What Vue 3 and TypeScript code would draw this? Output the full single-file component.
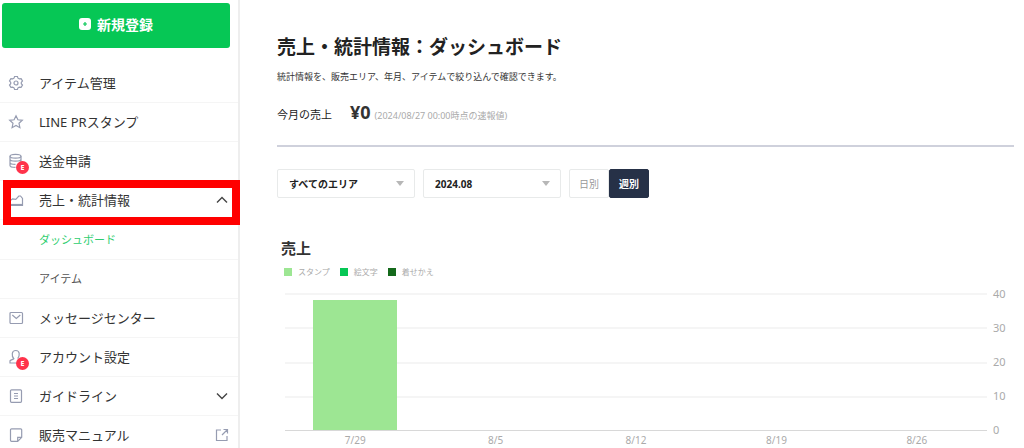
<script setup lang="ts">
import { ref } from 'vue'

type IconName = 'gear' | 'star' | 'coins' | 'chart' | 'mail' | 'user' | 'guide' | 'note'

interface MenuItem {
  label: string
  icon: IconName
  badge?: boolean
  trail?: 'up' | 'down' | 'external'
  highlighted?: boolean
  children?: { label: string; active: boolean }[]
}

const menu: MenuItem[] = [
  { label: 'アイテム管理', icon: 'gear' },
  { label: 'LINE PRスタンプ', icon: 'star' },
  { label: '送金申請', icon: 'coins', badge: true },
  {
    label: '売上・統計情報',
    icon: 'chart',
    trail: 'up',
    highlighted: true,
    children: [
      { label: 'ダッシュボード', active: true },
      { label: 'アイテム', active: false },
    ],
  },
  { label: 'メッセージセンター', icon: 'mail' },
  { label: 'アカウント設定', icon: 'user', badge: true },
  { label: 'ガイドライン', icon: 'guide', trail: 'down' },
  { label: '販売マニュアル', icon: 'note', trail: 'external' },
]

const area = ref('すべてのエリア')
const month = ref('2024.08')
const unit = ref<'day' | 'week'>('week')

const legend = [
  { label: 'スタンプ', kind: 'sticker' },
  { label: '絵文字', kind: 'emoji' },
  { label: '着せかえ', kind: 'theme' },
]

const maxValue = 40
const ticks = [40, 30, 20, 10, 0]
const weeks = [
  { label: '7/29', value: 38 },
  { label: '8/5', value: 0 },
  { label: '8/12', value: 0 },
  { label: '8/19', value: 0 },
  { label: '8/26', value: 0 },
]
</script>

<template>
  <div class="shell">
    <aside class="sidebar">
      <button class="create" type="button">
        <svg width="12" height="12" viewBox="0 0 12 12" aria-hidden="true">
          <rect width="12" height="12" rx="3" fill="#fff" />
          <path d="M6 4v4M4 6h4" stroke="#06c755" stroke-width="1.2" />
        </svg>
        新規登録
      </button>
      <nav>
        <ul class="menu">
          <li v-for="item in menu" :key="item.label">
            <a href="#" class="row" :class="{ highlighted: item.highlighted }">
              <span class="icon">
                <svg width="16" height="16" viewBox="0 0 16 16" aria-hidden="true">
                  <template v-if="item.icon === 'gear'">
                    <path d="M6.600 1.500h2.800l.6 1.700 1.300.7 1.800-.3 1.400 2.400-1.200 1.400v1.300l1.200 1.300-1.400 2.400-1.800-.3-1.300.7-.6 1.700H6.600L6 12.800l-1.300-.7-1.800.3L1.500 10l1.200-1.300V7.400L1.500 6l1.400-2.400 1.800.3L6 3.200z" />
                    <circle cx="8" cy="8" r="2" />
                  </template>
                  <path v-else-if="item.icon === 'star'" d="M8 1.800l1.900 4 4.400.5-3.300 3 .9 4.400L8 11.500l-3.900 2.200.9-4.400-3.300-3 4.400-.5z" />
                  <template v-else-if="item.icon === 'coins'">
                    <ellipse cx="7.500" cy="3.200" rx="5.500" ry="1.900" />
                    <path d="M2 3.200v9.300c0 1.100 2.400 1.900 5.500 1.900M13 3.200V9M2 6.300c0 1.100 2.400 1.900 5.500 1.900S13 7.400 13 6.300M2 9.400c0 1.100 2.400 1.900 5.500 1.900" />
                  </template>
                  <template v-else-if="item.icon === 'chart'">
                    <path d="M1.500 13.500V9.300l3-2.500 3.300.6 3-3.400h1.700l2 2.500v7z" />
                    <path d="M1.500 12.500h13" />
                  </template>
                  <template v-else-if="item.icon === 'mail'">
                    <rect x="2" y="2.500" width="12.500" height="11" rx="1" />
                    <path d="M4.300 5l4 3.400 4-3.400" />
                  </template>
                  <path v-else-if="item.icon === 'user'" d="M9 14H2v-2.300c1.500-1 3-1.300 3.800-2C4.300 8 4.100 6 4.300 4.500 4.500 2.700 6 1.500 7.800 1.500s3.200 1.200 3.400 3c.2 1.500-.2 3.500-1.500 5.200" />
                  <template v-else-if="item.icon === 'guide'">
                    <rect x="2.500" y="1.800" width="11" height="12.500" rx="1" />
                    <path d="M6 5.500h4M6 8h4M6 10.500h4" />
                  </template>
                  <path v-else d="M3.500 1.800h9.200a1 1 0 0 1 1 1v7.500l-4 4H3.500a1 1 0 0 1-1-1V2.800a1 1 0 0 1 1-1zM13.700 10.300h-4v4" />
                </svg>
                <span v-if="item.badge" class="badge">E</span>
              </span>
              <span class="label">{{ item.label }}</span>
              <svg v-if="item.trail" class="trail" width="14" height="14" viewBox="0 0 14 14" aria-hidden="true">
                <path v-if="item.trail === 'up'" class="arrow" d="M2 9.500l5-5 5 5" />
                <path v-else-if="item.trail === 'down'" class="arrow" d="M2 4.500l5 5 5-5" />
                <path v-else d="M6 2H1.500v10.500H12V8M8.500 1.500h4v4M12.500 1.500L7 7" />
              </svg>
            </a>
            <ul v-if="item.children" class="submenu">
              <li v-for="child in item.children" :key="child.label">
                <a href="#" class="row child" :class="{ active: child.active }">{{ child.label }}</a>
              </li>
            </ul>
          </li>
        </ul>
      </nav>
    </aside>

    <main class="content">
      <header class="head">
        <h1>売上・統計情報：ダッシュボード</h1>
        <p class="lead">統計情報を、販売エリア、年月、アイテムで絞り込んで確認できます。</p>
        <p class="sales">
          <span class="sales-name">今月の売上</span>
          <strong>¥0</strong>
          <small>(2024/08/27 00:00時点の速報値)</small>
        </p>
      </header>

      <div class="filters">
        <div class="picker">
          <select v-model="area" aria-label="エリア">
            <option>すべてのエリア</option>
          </select>
          <svg width="8" height="5" viewBox="0 0 8 5" aria-hidden="true"><path d="M0 0h8L4 5z" /></svg>
        </div>
        <div class="picker">
          <select v-model="month" aria-label="年月">
            <option>2024.08</option>
          </select>
          <svg width="8" height="5" viewBox="0 0 8 5" aria-hidden="true"><path d="M0 0h8L4 5z" /></svg>
        </div>
        <div class="units">
          <button type="button" :class="{ on: unit === 'day' }" :aria-pressed="unit === 'day'" @click="unit = 'day'">日別</button>
          <button type="button" :class="{ on: unit === 'week' }" :aria-pressed="unit === 'week'" @click="unit = 'week'">週別</button>
        </div>
      </div>

      <section class="report">
        <h2>売上</h2>
        <ul class="legend">
          <li v-for="entry in legend" :key="entry.kind">
            <i :class="entry.kind"></i>{{ entry.label }}
          </li>
        </ul>
        <div class="chart">
          <div class="plot-column">
            <div class="plot">
              <div class="lines"><span v-for="tick in ticks.slice(1)" :key="tick"></span></div>
              <div class="bars">
                <div v-for="week in weeks" :key="week.label" class="slot">
                  <div class="bar" :style="{ height: (week.value / maxValue) * 100 + '%' }"></div>
                </div>
              </div>
            </div>
            <div class="dates"><span v-for="week in weeks" :key="week.label">{{ week.label }}</span></div>
          </div>
          <div class="scale"><span v-for="tick in ticks" :key="tick">{{ tick }}</span></div>
        </div>
      </section>
    </main>
  </div>
</template>

<style>
body {
  margin: 0;
  background: #fff;
}
</style>

<style scoped>
.shell,
.shell * {
  box-sizing: border-box;
}

.shell {
  display: flex;
  height: 100vh;
  overflow: hidden;
  color: #222;
  font-family: 'Noto Sans', 'Noto Sans CJK JP', sans-serif;
}

h1,
h2,
p,
ul {
  margin: 0;
  padding: 0;
  list-style: none;
}

button,
select {
  font-family: inherit;
  cursor: pointer;
}

.sidebar {
  flex: 0 0 240px;
  padding-top: 3px;
  border-right: 2px solid #eee;
}

.create {
  display: flex;
  align-items: center;
  justify-content: center;
  gap: 6px;
  width: 228px;
  height: 45px;
  margin: 0 0 16px 2px;
  padding: 0 0 3px;
  border: 0;
  border-radius: 3px;
  background: #06c755;
  color: #fff;
  font-size: 14px;
  font-weight: 700;
}

.row {
  position: relative;
  display: flex;
  align-items: center;
  height: 39px;
  padding: 0 9px 0 8px;
  border-bottom: 1px solid #f5f5f5;
  color: #333;
  font-size: 13px;
  line-height: 20px;
  text-decoration: none;
}

.submenu {
  padding-top: 1px;
}

.row.child {
  padding-left: 39px;
  font-size: 11px;
  color: #555;
}

.row.child.active {
  color: #2fce70;
}

/* Frame drawing attention to the open section */
.highlighted::after {
  content: '';
  position: absolute;
  z-index: 1;
  inset: -1px -2px -6px 3px;
  border: 8px solid #f00;
}

.icon {
  position: relative;
  flex: none;
  width: 16px;
  height: 16px;
  margin-right: 15px;
}

.icon svg,
.trail {
  display: block;
  fill: none;
  stroke: #969cb1;
  stroke-width: 1.2;
}

.label {
  flex: 1;
}

.trail .arrow {
  stroke: #444;
  stroke-width: 1.4;
}

.badge {
  position: absolute;
  top: 8px;
  left: 8px;
  width: 13px;
  height: 13px;
  border-radius: 50%;
  background: #ff334b;
  color: #fff;
  font-size: 7px;
  font-weight: 700;
  line-height: 13px;
  text-align: center;
}

.content {
  flex: 1;
  min-width: 0;
  padding: 33px 10px 0 37px;
}

.head {
  padding-bottom: 21px;
  border-bottom: 2px solid #cfd1dc;
}

h1 {
  font-size: 19px;
  line-height: 28px;
}

.lead {
  margin-top: 9px;
  color: #333;
  font-size: 9px;
  line-height: 14px;
}

.sales {
  display: flex;
  align-items: baseline;
  height: 24px;
  margin-top: 16px;
  line-height: 24px;
}

.sales-name {
  margin-right: 18px;
  font-size: 11px;
}

.sales strong {
  margin-right: 4px;
  color: #333;
  font-size: 18px;
}

.sales small {
  color: #aaa;
  font-size: 9px;
}

.filters {
  display: flex;
  gap: 8px;
  height: 29px;
  margin-top: 22px;
}

.picker {
  position: relative;
  width: 138px;
}

.picker select {
  width: 100%;
  height: 100%;
  padding: 0 24px 0 11px;
  border: 1px solid #e8eaea;
  border-radius: 2px;
  background: #fff;
  color: #222;
  font-size: 10px;
  font-weight: 700;
  appearance: none;
}

.picker svg {
  position: absolute;
  top: 12px;
  right: 11px;
  fill: #b7b7b7;
  pointer-events: none;
}

.units {
  display: flex;
}

.units button {
  width: 40px;
  padding: 0;
  border: 1px solid #e8eaea;
  border-radius: 2px;
  background: #fff;
  color: #999;
  font-size: 10px;
}

.units .on {
  border-color: #263147;
  background: #263147;
  color: #fff;
  font-weight: 700;
}

.report {
  margin-top: 39px;
  padding-left: 4px;
}

h2 {
  color: #333;
  font-size: 15px;
  line-height: 22px;
}

.legend {
  display: flex;
  gap: 10px;
  margin: 8px 0 0 3px;
  color: #aaa;
  font-size: 8px;
  line-height: 10px;
}

.legend li {
  display: flex;
  align-items: center;
  gap: 6px;
}

.legend i {
  width: 8px;
  height: 8px;
}

.sticker,
.bar {
  background: #9de693;
}

.emoji {
  background: #06c755;
}

.theme {
  background: #14691b;
}

.chart {
  display: flex;
  padding-left: 4px;
  color: #aaa;
}

.plot-column {
  flex: 1;
  padding-top: 16px;
}

.plot {
  display: grid;
  height: 138px;
  border-bottom: 1px solid #d8d8d8;
}

.lines,
.bars {
  display: flex;
  grid-area: 1 / 1;
}

.lines {
  flex-direction: column;
}

.lines span {
  flex: 1;
  border-top: 2px solid #f5f5f5;
}

.slot {
  display: flex;
  flex: 1;
  align-items: flex-end;
  justify-content: center;
}

.bar {
  width: 60%;
}

.dates {
  display: flex;
  font-size: 10px;
  line-height: 18px;
  text-align: center;
}

.dates span {
  flex: 1;
}

.scale {
  flex: 0 0 27px;
  padding-left: 6px;
  font-size: 11px;
  line-height: 34px;
}

.scale span {
  display: block;
}
</style>
